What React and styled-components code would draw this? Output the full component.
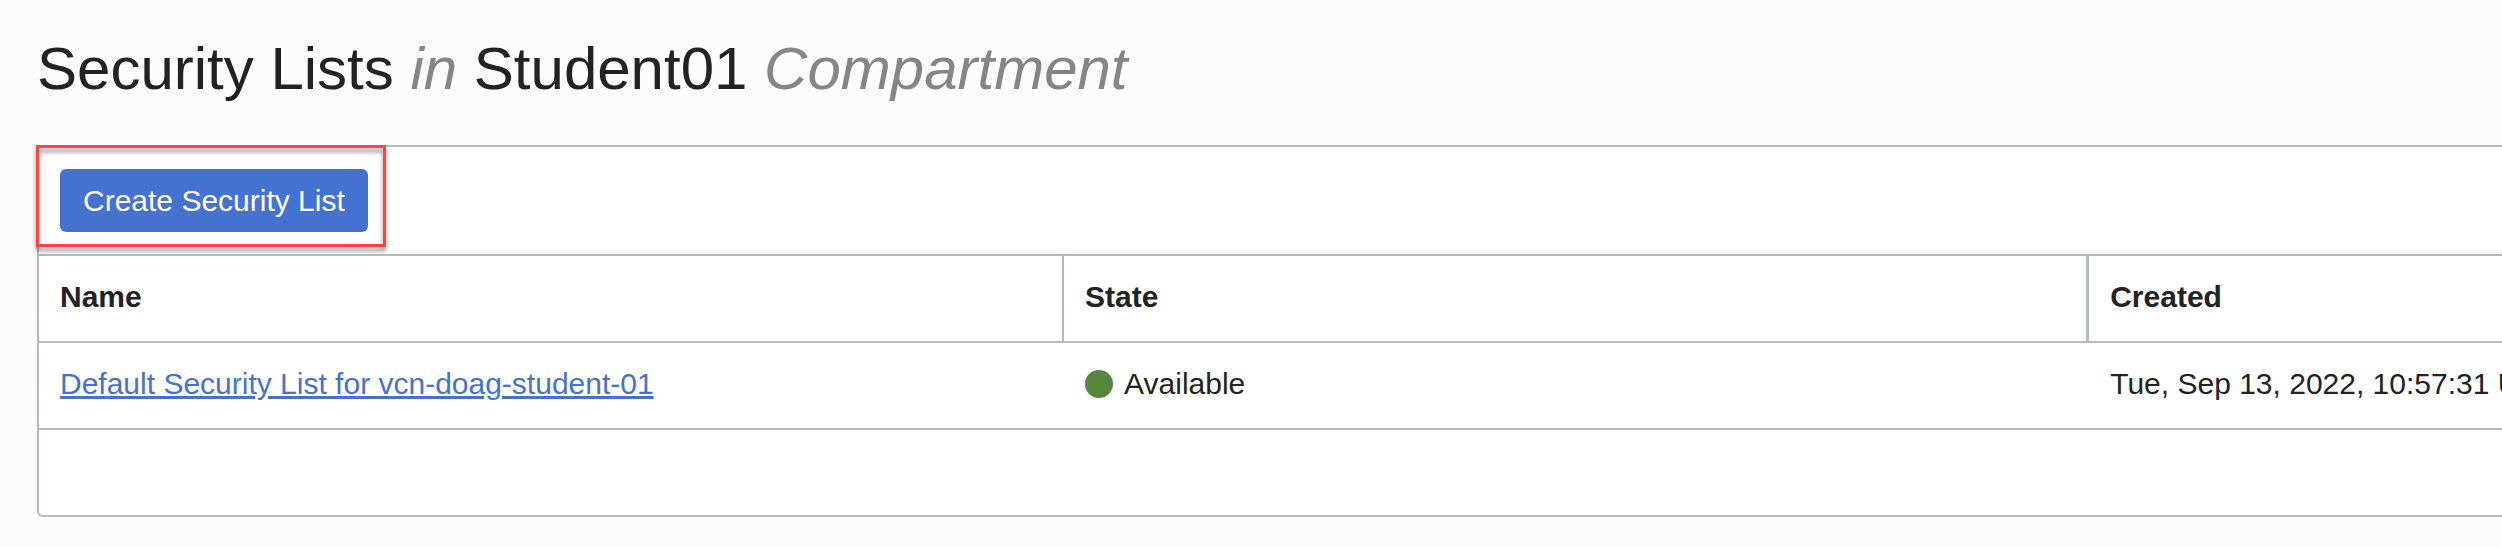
import React from "react";
import styled, { createGlobalStyle } from "styled-components";

const line = "#b5bac0";

const GlobalStyle = createGlobalStyle`
  * { box-sizing: border-box; }
  html { background: #fcfcfc; }
  body {
    margin: 0;
    overflow-x: hidden;
    color: #222;
    font-family: Arial, "Liberation Sans", sans-serif;
    font-size: 30px;
    line-height: 36px;
  }
`;

const Page = styled.main`
  padding: 34px 0 30px 37px;
`;

const Title = styled.h1`
  margin: 0 0 41px;
  font-size: 60px;
  font-weight: 400;
  line-height: 70px;
`;

const Muted = styled.em`
  color: #858585;
`;

const Panel = styled.section`
  background: #fff;
  border: 2px solid ${line};
  border-right: 0;
  border-radius: 6px 0 0 6px;
`;

const Toolbar = styled.div`
  display: flex;
  padding: 22px 21px;
`;

const Highlight = styled.div`
  position: relative;
  display: flex;

  &::after {
    content: "";
    position: absolute;
    inset: -24px -18px -15px -24px;
    border: 3px solid #ff4444;
    filter: drop-shadow(0 4px 2px rgba(0, 0, 0, 0.45));
    pointer-events: none;
  }
`;

const PrimaryButton = styled.button`
  height: 63px;
  padding: 0 23px;
  border: 0;
  border-radius: 6px;
  background: #4672cf;
  color: #fff;
  font: inherit;
  cursor: pointer;
`;

const Table = styled.table`
  width: 100%;
  table-layout: fixed;
  border-collapse: separate;
  border-spacing: 0;
`;

const HeaderCell = styled.th`
  width: ${(p) => (p.$last ? "auto" : "41.62%")};
  height: 89px;
  padding: 0 21px 3px;
  border: 0 solid ${line};
  border-width: 2px ${(p) => p.$divider || 0}px 2px 0;
  text-align: left;
  font-weight: 700;
`;

const Cell = styled.td`
  height: 87px;
  padding: 0 0 3px 21px;
  border-bottom: 2px solid ${line};
  white-space: nowrap;
`;

const Link = styled.a`
  color: #4672cf;
  text-decoration: underline;
`;

const Status = styled.span`
  display: flex;
  align-items: center;
  gap: 11px;

  &::before {
    content: "";
    width: 28px;
    height: 28px;
    border-radius: 50%;
    background: #58863d;
  }
`;

const Footer = styled.div`
  height: 85px;
`;

export default function App() {
  return (
    <>
      <GlobalStyle />
      <Page>
        <Title>
          Security Lists <Muted>in</Muted> Student01 <Muted>Compartment</Muted>
        </Title>
        <Panel>
          <Toolbar>
            <Highlight>
              <PrimaryButton type="button">Create Security List</PrimaryButton>
            </Highlight>
          </Toolbar>
          <Table>
            <thead>
              <tr>
                <HeaderCell scope="col" $divider={2}>Name</HeaderCell>
                <HeaderCell scope="col" $divider={3}>State</HeaderCell>
                <HeaderCell scope="col" $last>Created</HeaderCell>
              </tr>
            </thead>
            <tbody>
              <tr>
                <Cell>
                  <Link href="#default-security-list">
                    Default Security List for vcn-doag-student-01
                  </Link>
                </Cell>
                <Cell>
                  <Status>Available</Status>
                </Cell>
                <Cell>Tue, Sep 13, 2022, 10:57:31 UTC</Cell>
              </tr>
            </tbody>
          </Table>
          <Footer />
        </Panel>
      </Page>
    </>
  );
}
